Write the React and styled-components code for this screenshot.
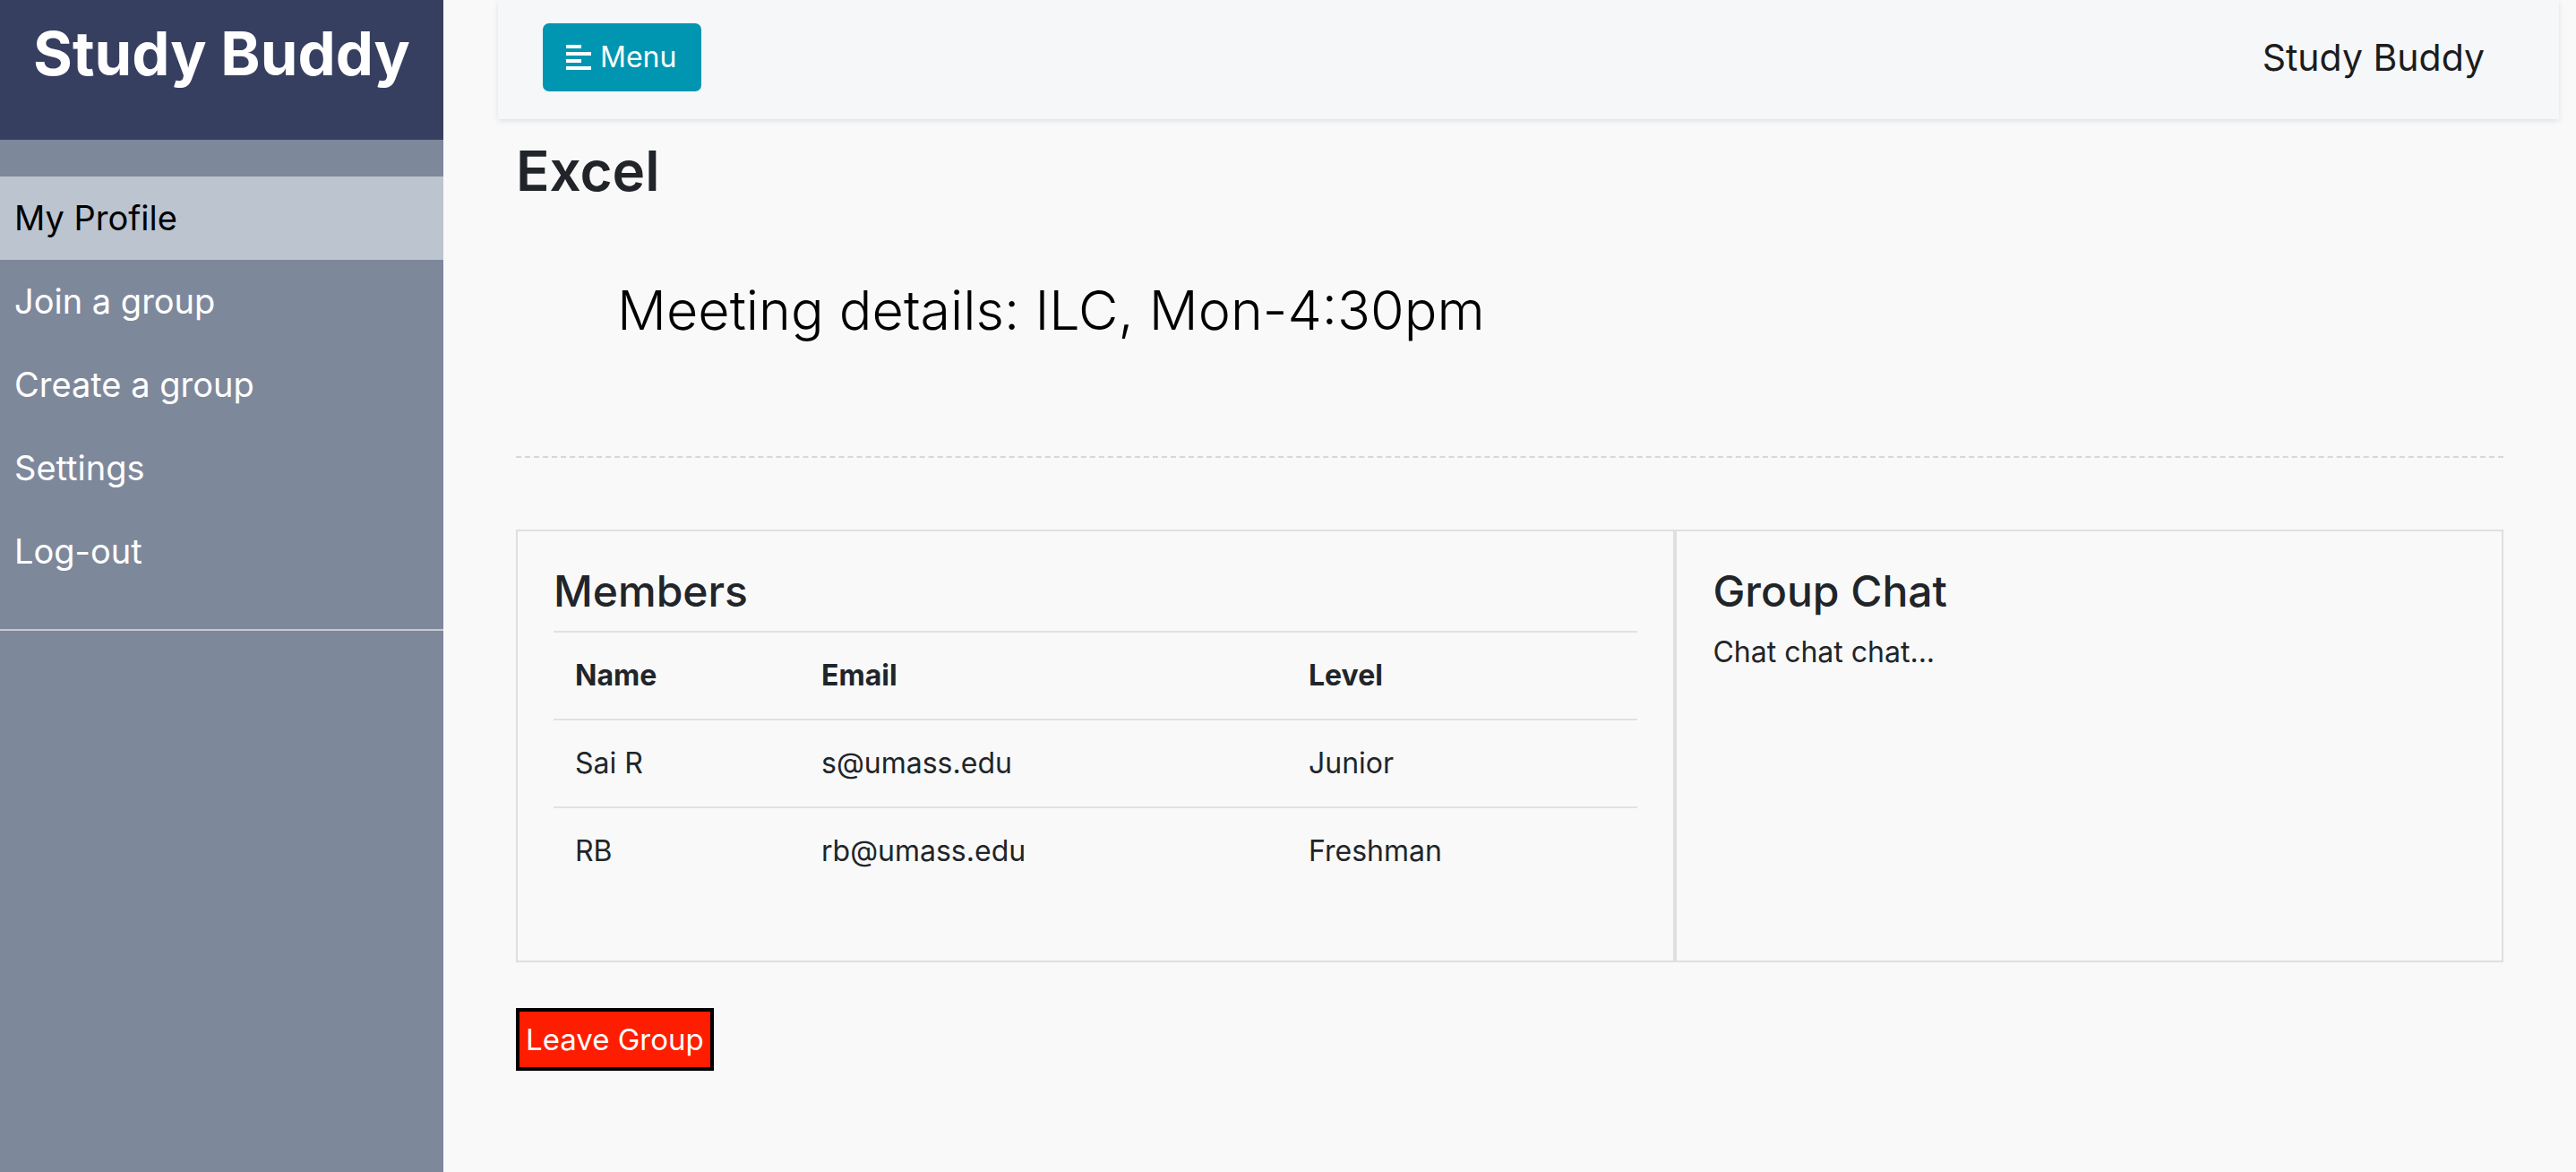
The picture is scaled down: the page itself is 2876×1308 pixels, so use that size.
import React from 'react';
import styled, { createGlobalStyle } from 'styled-components';

const GlobalStyle = createGlobalStyle`
  html, body {
    margin: 0;
    padding: 0;
    background: #f9f9f9;
    font-family: 'Inter', 'Liberation Sans', sans-serif;
    color: #212529;
  }
  * {
    box-sizing: border-box;
  }
`;

const Layout = styled.div`
  display: flex;
  min-height: 1308px;
`;

const Sidebar = styled.aside`
  width: 495px;
  flex-shrink: 0;
  background: #7e889b;
  display: flex;
  flex-direction: column;
`;

const Brand = styled.div`
  height: 156px;
  background: #363f60;
  color: #fff;
  font-size: 67px;
  font-weight: 700;
  line-height: 1.2;
  text-align: center;
  padding-top: 20px;
`;

const NavList = styled.nav`
  display: flex;
  flex-direction: column;
  padding: 41px 0 40px;
  border-bottom: 2px solid #c6c9d0;
`;

const NavItem = styled.a`
  display: flex;
  align-items: center;
  height: 93px;
  padding-left: 16px;
  font-size: 38px;
  line-height: 1.2;
  text-decoration: none;
  color: ${(p) => (p.active ? '#000' : '#fff')};
  background: ${(p) => (p.active ? '#bcc4d0' : 'transparent')};
`;

const Main = styled.main`
  flex: 1;
  display: flex;
  flex-direction: column;
`;

const Topbar = styled.header`
  height: 133px;
  margin: 0 19px 0 61px;
  padding: 0 83px 6px 50px;
  display: flex;
  align-items: center;
  justify-content: space-between;
  background: #f6f7f9;
  box-shadow: 0 2px 6px rgba(0, 0, 0, 0.1);
`;

const MenuButton = styled.button`
  display: flex;
  align-items: center;
  gap: 10px;
  height: 76px;
  padding: 0 28px 0 26px;
  border: none;
  border-radius: 7px;
  background: #0095b0;
  color: #fff;
  font-family: inherit;
  font-size: 32px;
  cursor: pointer;
`;

const TopTitle = styled.span`
  font-size: 41px;
  color: #1c1c1c;
`;

const Content = styled.section`
  padding: 21px 81px 0;
  display: flex;
  flex-direction: column;
`;

const PageTitle = styled.h1`
  margin: 0;
  font-size: 62px;
  font-weight: 600;
  line-height: 1.2;
`;

const Meeting = styled.p`
  margin: 82px 0 0 113px;
  font-size: 61px;
  font-weight: 300;
  line-height: 1.2;
  color: #000;
`;

const Divider = styled.hr`
  margin: 125px 0 0;
  border: none;
  border-top: 2px dashed #d8d8d8;
`;

const CardRow = styled.div`
  display: grid;
  grid-template-columns: 7fr 5fr;
  margin-top: 80px;
`;

const Card = styled.div`
  border: 2px solid #dfdfdf;
  padding: 38px 40px 40px;
`;

const CardTitle = styled.h4`
  margin: 0 0 16px;
  font-size: 48px;
  font-weight: 500;
  line-height: 1.2;
`;

const Table = styled.table`
  width: 100%;
  border-collapse: collapse;
  margin-bottom: 34px;
  font-size: 32px;
`;

const Cell = styled.td`
  padding: 24px;
  line-height: 48px;
  text-align: left;
  border-top: 2px solid #dee2e6;
  font-weight: ${(p) => (p.head ? 700 : 400)};
  width: ${(p) => p.w || 'auto'};
`;

const ChatText = styled.p`
  margin: 0;
  font-size: 32px;
  line-height: 48px;
`;

const LeaveButton = styled.button`
  align-self: flex-start;
  margin-top: 51px;
  padding: 9px 7px;
  background: #ff1d00;
  color: #fff;
  border: 4px solid #000;
  font-family: inherit;
  font-size: 33px;
  line-height: 44px;
  cursor: pointer;
`;

const MenuIcon = () => (
  <svg width="28" height="28" viewBox="0 0 28 28" fill="#fff">
    <rect x="0" y="0" width="17" height="4" />
    <rect x="0" y="8" width="28" height="4" />
    <rect x="0" y="16" width="17" height="4" />
    <rect x="0" y="24" width="28" height="4" />
  </svg>
);

const navItems = ['My Profile', 'Join a group', 'Create a group', 'Settings', 'Log-out'];

const members = [
  { name: 'Sai R', email: 's@umass.edu', level: 'Junior' },
  { name: 'RB', email: 'rb@umass.edu', level: 'Freshman' },
];

export default function App() {
  return (
    <>
      <GlobalStyle />
      <Layout>
        <Sidebar>
          <Brand>Study Buddy</Brand>
          <NavList>
            {navItems.map((item, i) => (
              <NavItem key={item} href="#" active={i === 0}>
                {item}
              </NavItem>
            ))}
          </NavList>
        </Sidebar>
        <Main>
          <Topbar>
            <MenuButton>
              <MenuIcon />
              Menu
            </MenuButton>
            <TopTitle>Study Buddy</TopTitle>
          </Topbar>
          <Content>
            <PageTitle>Excel</PageTitle>
            <Meeting>Meeting details: ILC, Mon-4:30pm</Meeting>
            <Divider />
            <CardRow>
              <Card>
                <CardTitle>Members</CardTitle>
                <Table>
                  <thead>
                    <tr>
                      <Cell as="th" head w="275px">Name</Cell>
                      <Cell as="th" head w="544px">Email</Cell>
                      <Cell as="th" head>Level</Cell>
                    </tr>
                  </thead>
                  <tbody>
                    {members.map((m) => (
                      <tr key={m.email}>
                        <Cell>{m.name}</Cell>
                        <Cell>{m.email}</Cell>
                        <Cell>{m.level}</Cell>
                      </tr>
                    ))}
                  </tbody>
                </Table>
              </Card>
              <Card>
                <CardTitle>Group Chat</CardTitle>
                <ChatText>Chat chat chat...</ChatText>
              </Card>
            </CardRow>
            <LeaveButton>Leave Group</LeaveButton>
          </Content>
        </Main>
      </Layout>
    </>
  );
}
